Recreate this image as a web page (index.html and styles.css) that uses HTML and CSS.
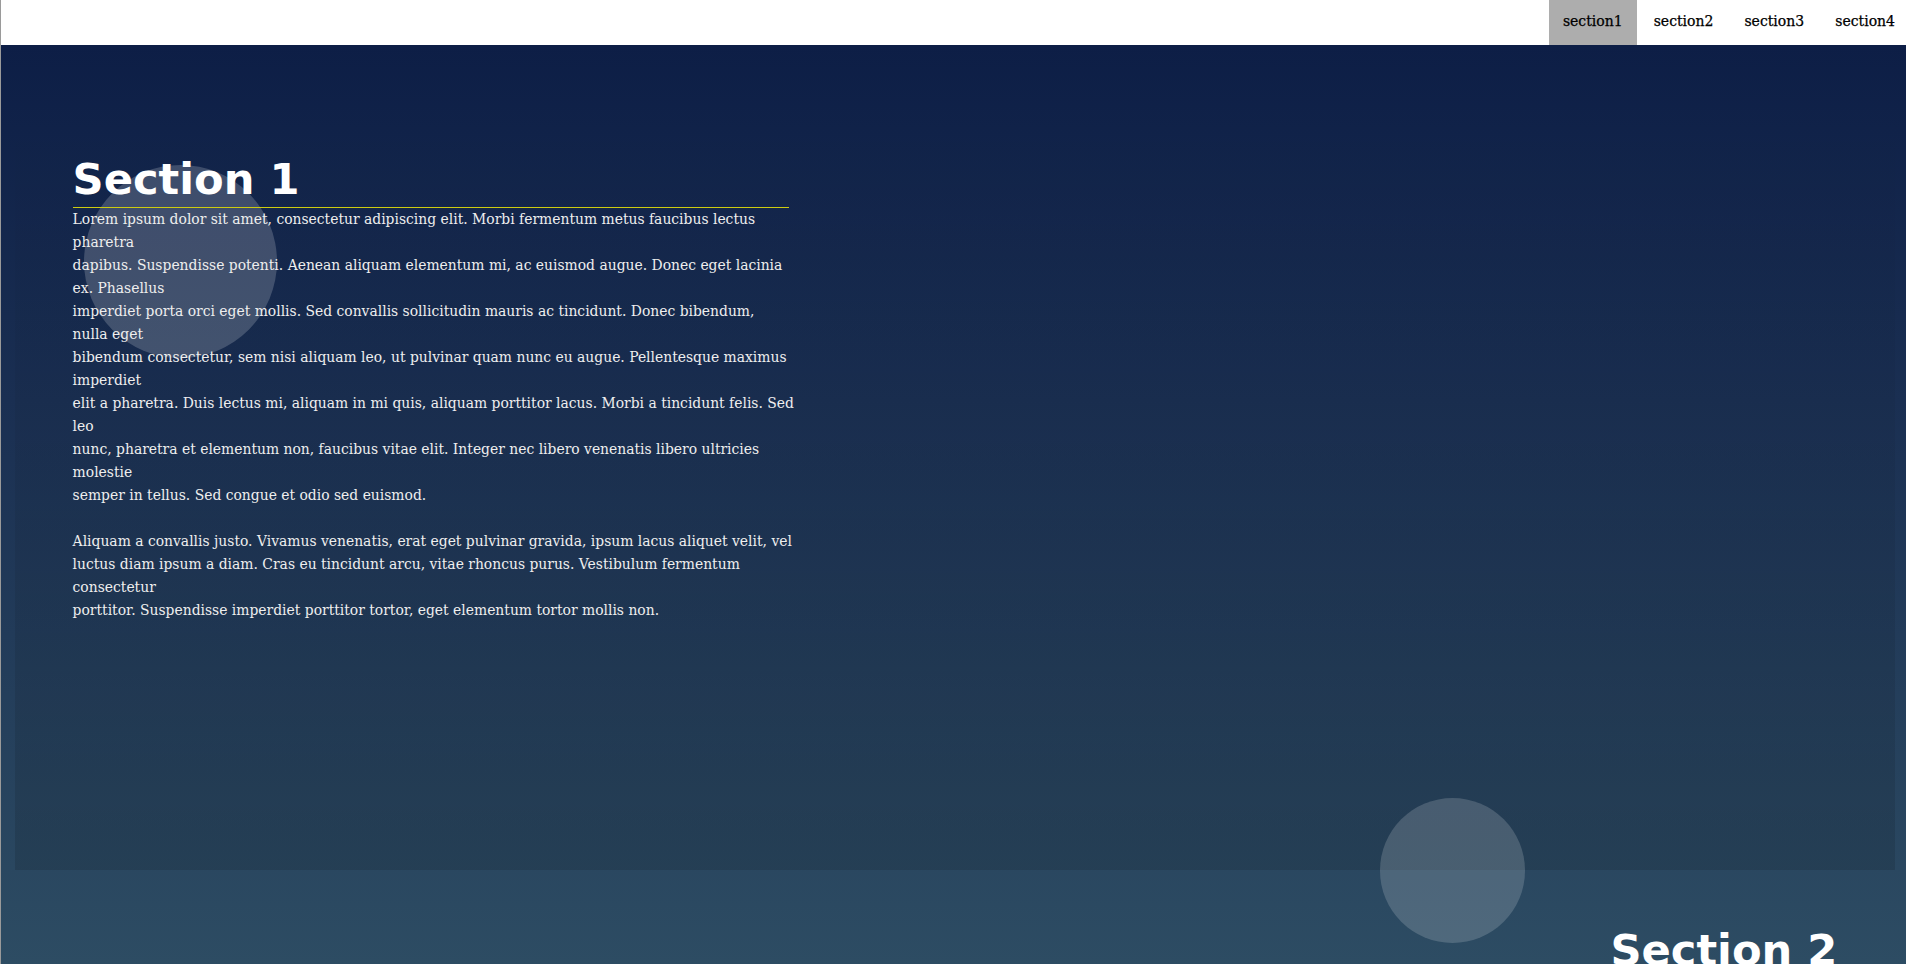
FILE: index.html
```html
<!DOCTYPE html>
<html lang="en">
<head>
<meta charset="utf-8">
<title>Landing Page</title>
<link rel="stylesheet" href="styles.css">
</head>
<body>
<header class="page-header">
  <nav class="navbar">
    <ul class="navbar-list">
      <li><a class="menu-link is-active" href="#section1">section1</a></li>
      <li><a class="menu-link" href="#section2">section2</a></li>
      <li><a class="menu-link" href="#section3">section3</a></li>
      <li><a class="menu-link" href="#section4">section4</a></li>
    </ul>
  </nav>
</header>
<main class="main">
  <section id="section1" class="section section-active">
    <span class="bubble bubble-a"></span>
    <div class="landing">
      <h2 class="landing-title">Section 1</h2>
      <p class="landing-text"><span class="ln">Lorem ipsum dolor sit amet, consectetur adipiscing elit. Morbi fermentum metus faucibus lectus</span><br><span class="ln">pharetra</span><br><span class="ln">dapibus. Suspendisse potenti. Aenean aliquam elementum mi, ac euismod augue. Donec eget lacinia</span><br><span class="ln">ex. Phasellus</span><br><span class="ln">imperdiet porta orci eget mollis. Sed convallis sollicitudin mauris ac tincidunt. Donec bibendum,</span><br><span class="ln">nulla eget</span><br><span class="ln">bibendum consectetur, sem nisi aliquam leo, ut pulvinar quam nunc eu augue. Pellentesque maximus</span><br><span class="ln">imperdiet</span><br><span class="ln">elit a pharetra. Duis lectus mi, aliquam in mi quis, aliquam porttitor lacus. Morbi a tincidunt felis. Sed</span><br><span class="ln">leo</span><br><span class="ln">nunc, pharetra et elementum non, faucibus vitae elit. Integer nec libero venenatis libero ultricies</span><br><span class="ln">molestie</span><br><span class="ln">semper in tellus. Sed congue et odio sed euismod.</span></p>
      <p class="landing-text spaced"><span class="ln">Aliquam a convallis justo. Vivamus venenatis, erat eget pulvinar gravida, ipsum lacus aliquet velit, vel</span><br><span class="ln">luctus diam ipsum a diam. Cras eu tincidunt arcu, vitae rhoncus purus. Vestibulum fermentum</span><br><span class="ln">consectetur</span><br><span class="ln">porttitor. Suspendisse imperdiet porttitor tortor, eget elementum tortor mollis non.</span></p>
    </div>
  </section>
  <section id="section2" class="section">
    <span class="bubble bubble-b"></span>
    <div class="landing landing-right">
      <h2 class="landing-title">Section 2</h2>
      <p class="landing-text">Lorem ipsum dolor sit amet, consectetur adipiscing elit. Morbi fermentum metus faucibus lectus pharetra dapibus. Suspendisse potenti. Aenean aliquam elementum mi, ac euismod augue.</p>
    </div>
  </section>
</main>
</body>
</html>
```
FILE: styles.css
```css
html, body {
  margin: 0;
  padding: 0;
}

body {
  border-left: 1px solid #9a9a9a;
  font-family: "DejaVu Serif", serif;
  color: #fff;
  background: linear-gradient(to bottom, #ffffff 0, #ffffff 45px, #0d1e46 45px, #1a2f52 400px, #2d4c63 964px, #2f5067 1800px);
  overflow-x: hidden;
}

/* Header / navigation */
.page-header {
  background: #fff;
  height: 45px;
  overflow: hidden;
}

.navbar-list {
  list-style: none;
  margin: 0 -3px 0 0;
  padding: 0;
  display: flex;
  justify-content: flex-end;
  gap: 3px;
}

.menu-link {
  display: block;
  height: 45px;
  line-height: 43px;
  padding: 0 14px;
  font-family: "DejaVu Serif", serif;
  font-size: 14px;
  font-weight: normal;
  color: #000;
  text-decoration: none;
  -webkit-text-stroke: 0.25px #000;
}

.menu-link.is-active {
  background: #adadad;
}

/* Main layout */
.main {
  margin: 0 11px 0 14px;
  padding-top: 54px;
}

.section {
  position: relative;
  min-height: 771px;
}

.section-active {
  background: linear-gradient(to bottom, rgba(0, 0, 0, 0) 0%, rgba(0, 0, 0, 0.12) 100%);
}

.landing {
  position: relative;
  z-index: 1;
  max-width: 716px;
  padding: 57.6px;
}

.landing-right {
  margin-left: auto;
  text-align: right;
}

.landing-title {
  margin: 0;
  font-family: "DejaVu Sans", sans-serif;
  font-weight: bold;
  font-size: 43.2px;
  line-height: 45px;
  padding-bottom: 5px;
  color: #fff;
  border-bottom: 1px solid #cccc11;
}

.landing-text {
  margin: 0;
  font-size: 13.9px;
  line-height: 23.04px;
  color: #eee;
}

.landing-text .ln {
  white-space: nowrap;
}

.landing-text.spaced {
  margin-top: 23px;
}

/* Decorative circles */
.bubble {
  position: absolute;
  border-radius: 50%;
  background: rgba(255, 255, 255, 0.187);
  z-index: 0;
}

.bubble-a {
  left: 69px;
  top: 66px;
  width: 193px;
  height: 193px;
}

.bubble-b {
  right: 370px;
  top: -72.5px;
  width: 145px;
  height: 145px;
  background: rgba(255, 255, 255, 0.17);
}
```
